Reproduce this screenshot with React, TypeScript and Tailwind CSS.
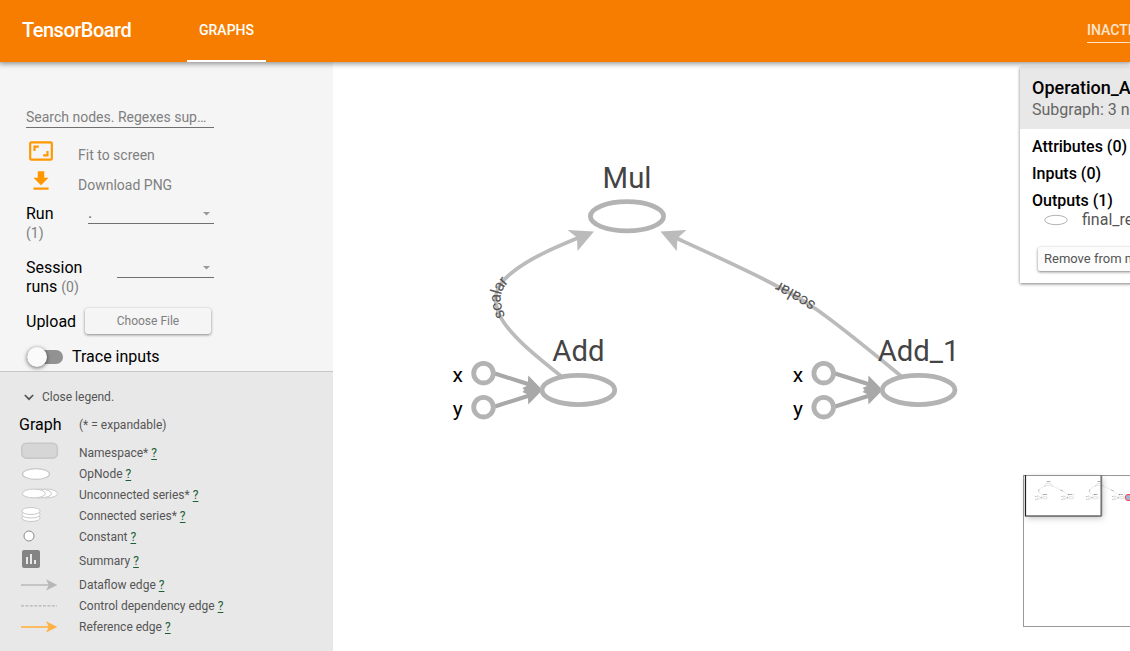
import React from "react";

function SelectField({ value, className }: { value: string; className: string }) {
  return (
    <div className={`flex h-5 items-center justify-between border-b border-[#707070] text-base text-[#666] ${className}`}>
      <span className="pb-px">{value}</span>
      <svg className="mr-1" width="7" height="4" viewBox="0 0 7 4">
        <path d="M0 0h7L3.500 3.500z" fill="#999" />
      </svg>
    </div>
  );
}

const ARROW = "M0 0L10 5L0 10L2.500 5z";

const legend: { label: string; row: string; icon: React.ReactNode }[] = [
  {
    label: "Namespace*",
    row: "h-[21px]",
    icon: <rect x="0.800" y="0.300" width="35.500" height="14.800" rx="4.500" fill="#d6d6d6" stroke="#c8c8c8" strokeWidth="1.600" />,
  },
  {
    label: "OpNode",
    row: "h-[21px]",
    icon: <ellipse cx="15" cy="10" rx="13.500" ry="5.300" fill="#fff" stroke="#c8c8c8" strokeWidth="1.300" />,
  },
  {
    label: "Unconnected series*",
    row: "h-[21px]",
    icon: (
      <g fill="#fff" stroke="#c8c8c8" strokeWidth="1">
        <ellipse cx="25.500" cy="8.500" rx="11" ry="4.400" />
        <ellipse cx="19" cy="8.500" rx="11.500" ry="4.400" />
        <ellipse cx="12.800" cy="8.500" rx="11.500" ry="4.400" />
      </g>
    ),
  },
  {
    label: "Connected series*",
    row: "h-[21px]",
    icon: (
      <g fill="#fff" stroke="#c8c8c8" strokeWidth="1">
        <ellipse cx="10" cy="12" rx="9.200" ry="3.500" />
        <ellipse cx="10" cy="8.500" rx="9.200" ry="3.500" />
        <ellipse cx="10" cy="5" rx="9.200" ry="3.500" />
      </g>
    ),
  },
  {
    label: "Constant",
    row: "h-[21px]",
    icon: <circle cx="8" cy="9" r="5" fill="#fff" stroke="#8c8c8c" strokeWidth="1" />,
  },
  {
    label: "Summary",
    row: "h-[27px]",
    icon: (
      <path
        transform="translate(-2 -4)"
        d="M19 3H5c-1.100 0-2 .9-2 2v14c0 1.100.9 2 2 2h14c1.100 0 2-.9 2-2V5c0-1.100-.9-2-2-2zM9 17H7v-7h2v7zm4 0h-2V7h2v10zm4 0h-2v-4h2v4z"
        fill="#848484"
      />
    ),
  },
  {
    label: "Dataflow edge",
    row: "h-[21px]",
    icon: (
      <g>
        <path d="M0 10H28" stroke="#bbb" strokeWidth="1.600" />
        <path d={ARROW} transform="translate(25 4.300) scale(1.130)" fill="#b7b7b7" />
      </g>
    ),
  },
  {
    label: "Control dependency edge",
    row: "h-[21px]",
    icon: <path d="M0 9.800H36" stroke="#b4b4b4" strokeWidth="1.300" strokeDasharray="3 1.400" />,
  },
  {
    label: "Reference edge",
    row: "h-[21px]",
    icon: (
      <g>
        <path d="M0 10H28" stroke="#ffb143" strokeWidth="1.600" />
        <path d={ARROW} transform="translate(25 4.300) scale(1.130)" fill="#ffb143" />
      </g>
    ),
  },
];

function AddNode({ x, label }: { x: number; label: string }) {
  return (
    <g transform={`translate(${x} 390)`}>
      <g stroke="#a8a8a8" strokeWidth="4">
        <path d="M-83.500 -16.500L-49 -5.500" />
        <path d="M-83.500 16.500L-49 5.500" />
      </g>
      <path d="M-36 0L-50.100 -14.400L-50.700 -4.500L-56 -2L-54 0L-56 2L-50.700 4.500L-50.100 14.400z" fill="#a8a8a8" />
      <g fill="#fff" stroke="#b3b3b3" strokeWidth="4.800">
        <circle cx="-94.900" cy="-16.800" r="9.800" />
        <circle cx="-94.900" cy="17.200" r="9.800" />
        <ellipse cx="0" cy="0" rx="36.400" ry="14.600" />
      </g>
      <text y="-29.200" fontSize="29.300" fill="#444" textAnchor="middle">{label}</text>
      <g fontSize="21" fill="#000" textAnchor="middle">
        <text x="-120.600" y="-8.300">x</text>
        <text x="-120.600" y="25.500">y</text>
      </g>
    </g>
  );
}

function Graph({ id }: { id: string }) {
  return (
    <g>
      <g fill="none" stroke="#bbb" strokeWidth="3.700">
        <path id={`${id}-left`} d="M561 376C536 356 508 334 499 314C490 292 501 281 514 271C532 257 556 247 579 237.500" />
        <path id={`${id}-right`} d="M901 376C873 353 838 324 813 307C780 285 722 259 675 237.500" />
      </g>
      <g fill="#bbb">
        <path d="M594 231.500L567.500 230L577 237.500L577.500 251z" />
        <path d="M660.500 231.500L686.500 230L677.500 238L676.700 251z" />
      </g>
      <g fontSize="16" fill="#555">
        <text dy="5">
          <textPath href={`#${id}-left`} startOffset="83.500">scalar</textPath>
        </text>
        <text dy="5">
          <textPath href={`#${id}-right`} startOffset="111">scalar</textPath>
        </text>
      </g>
      <ellipse cx="627" cy="216.300" rx="36.600" ry="14.600" fill="#fff" stroke="#b3b3b3" strokeWidth="4.800" />
      <text x="627" y="187.700" fontSize="29.300" fill="#444" textAnchor="middle">Mul</text>
      <AddNode x={578.4} label="Add" />
      <AddNode x={918.6} label="Add_1" />
    </g>
  );
}

export default function App() {
  return (
    <div className="flex h-[651px] w-[1130px] flex-col overflow-hidden bg-white font-['Roboto',sans-serif] text-black">
      <header className="relative z-10 flex h-[62px] shrink-0 bg-[#f77d00] text-white shadow-[0_1px_5px_1px_rgba(0,0,0,0.4)]">
        <h1 className="w-[187px] pl-[22px] pt-[15px] text-[20px] font-medium leading-[30px] tracking-[-0.5px]">TensorBoard</h1>
        <div className="flex w-[79px] items-center justify-center border-b-2 border-white text-sm font-medium">GRAPHS</div>
        <div className="ml-auto mt-[18px] flex h-[25px] w-[43px] items-center overflow-hidden whitespace-nowrap border-b border-white/80 text-sm font-medium text-white/80">
          INACTIVE
        </div>
      </header>

      <div className="flex min-h-0 flex-1">
        <aside className="flex w-[333px] shrink-0 flex-col bg-[#f5f5f5]">
          <div className="h-[309px] shrink-0 pl-[26px] pt-[46px]">
            <div className="h-5 w-[188px] whitespace-nowrap border-b border-[#707070] text-sm leading-[19px] text-[#808080]">
              Search nodes. Regexes sup…
            </div>
            <div className="mt-3 flex h-[30px] text-sm leading-[31px] text-[#808080]">
              <svg className="-mt-0.5 ml-0.5 mr-6 shrink-0" width="26" height="26" viewBox="0 0 24 24" fill="#ff9800">
                <path d="M19 12h-2v3h-3v2h5v-5zM7 9h3V7H5v5h2V9zm14-6H3c-1.100 0-2 .9-2 2v14c0 1.100.9 2 2 2h18c1.100 0 2-.9 2-2V5c0-1.100-.9-2-2-2zm0 16.010H3V4.990h18v14.020z" />
              </svg>
              Fit to screen
            </div>
            <div className="flex h-[30px] text-sm leading-[31px] text-[#808080]">
              <svg className="-mt-0.5 ml-0.5 mr-6 shrink-0" width="26" height="26" viewBox="0 0 24 24" fill="#ff9800">
                <path d="M19 9h-4V3H9v6H5l7 7 7-7zM5 18v2h14v-2H5z" />
              </svg>
              Download PNG
            </div>
            <div className="mt-1 flex h-[54px] leading-[19px]">
              <div className="w-[62px]">
                Run
                <div className="text-sm leading-[21px] text-[#808080]">(1)</div>
              </div>
              <SelectField value="." className="w-[126px]" />
            </div>
            <div className="flex h-[50px] leading-[19px]">
              <div className="w-[91px]">
                Session
                <br />
                runs <span className="text-sm leading-[19px] text-[#808080]">(0)</span>
              </div>
              <SelectField value="" className="w-[97px]" />
            </div>
            <div className="flex h-[26px] items-center">
              <span className="w-[59px] pt-0.5">Upload</span>
              <button className="h-[26px] w-[126px] rounded-[3px] bg-[#f5f5f5] text-xs text-[#808080] shadow-[0_1px_3px_rgba(0,0,0,0.45)]">Choose File</button>
            </div>
            <div className="mt-3 flex h-[22px] items-center">
              <div className="ml-px flex h-3.5 w-9 items-center rounded-full bg-[#929292]">
                <span className="h-5 w-5 shrink-0 rounded-full bg-[#fafafa] shadow-[0_1px_4px_rgba(0,0,0,0.6)]" />
              </div>
              <span className="ml-[9px]">Trace inputs</span>
            </div>
          </div>

          <div className="flex-1 border-t border-[#c6c6c6] bg-[#e8e8e8] text-xs text-[#555]">
            <div className="mt-3.5 flex h-[22px] items-center pl-6">
              <svg className="mr-2" width="10" height="7" viewBox="0 0 10 7" fill="none" stroke="#555" strokeWidth="1.700">
                <path d="M0.800 1L5 5.200L9.200 1" />
              </svg>
              Close legend.
            </div>
            <div className="mt-1.5 flex h-[22px] items-center pl-[19px]">
              <span className="w-[60px] text-base text-black">Graph</span>
              (* = expandable)
            </div>
            <div className="pl-[21px] pt-1.5">
              {legend.map((item) => (
                <div key={item.label} className={`flex items-center ${item.row}`}>
                  <svg className="mr-[18px] shrink-0" width="40" height="20" viewBox="0 0 40 20" overflow="visible">
                    {item.icon}
                  </svg>
                  <span>
                    {item.label}{" "}
                    <span className="text-[#1b6034] underline underline-offset-2">?</span>
                  </span>
                </div>
              ))}
            </div>
          </div>
        </aside>

        <main className="relative min-w-0 flex-1 overflow-hidden">
          <svg className="block" width="797" height="589" viewBox="333 62 797 589">
            <Graph id="main" />
          </svg>

          <section className="absolute left-[687px] top-[5px] h-[216px] w-[310px] whitespace-nowrap bg-white shadow-[0_1px_3px_rgba(0,0,0,0.5)]">
            <div className="h-[62px] bg-[#e8e8e8] pl-3 pt-2.5">
              <div className="text-lg font-medium leading-[22px]">Operation_Added</div>
              <div className="text-base leading-[22px] text-[#666]">Subgraph: 3 nodes</div>
            </div>
            <div className="pl-3 pt-1 font-medium leading-[27px]">
              <div>Attributes (0)</div>
              <div>Inputs (0)</div>
              <div>Outputs (1)</div>
            </div>
            <div className="-mt-[5px] flex h-[22px] items-center pl-6 text-base text-[#555]">
              <svg className="mr-3.5" width="24" height="12" viewBox="0 0 24 12">
                <ellipse cx="12" cy="6" rx="11.300" ry="4.700" fill="#fff" stroke="#b3b3b3" />
              </svg>
              final_result
            </div>
            <button className="ml-[18px] mt-4 h-6 w-[200px] rounded-[2px] bg-[#fcfcfc] pl-1.5 text-left text-[13px] text-[#555] shadow-[0_1px_3px_rgba(0,0,0,0.5)]">
              Remove from main graph
            </button>
          </section>

          <div className="absolute left-[690px] top-[413px] h-[152px] w-[200px] border border-[#999] bg-white">
            <svg className="block" width="198" height="150" viewBox="1024 476 198 150" overflow="visible">
              <rect x="1025.500" y="476" width="76" height="40" fill="#fff" className="drop-shadow-[1px_2px_3px_rgba(0,0,0,0.25)]" />
              <g transform="translate(1000.400 467.700) scale(0.077)">
                <Graph id="mini-a" />
              </g>
              <g transform="translate(1051.100 467.700) scale(0.077)">
                <Graph id="mini-b" />
              </g>
              <rect x="1125.500" y="494.500" width="12" height="6" rx="2.500" fill="#a9b3d3" stroke="#f44" />
              <path d="M1025.500 475V516H1101.500" fill="none" stroke="#222" strokeWidth="1.200" />
              <path d="M1101.300 475V516" stroke="#777" strokeWidth="1.800" />
            </svg>
          </div>
        </main>
      </div>
    </div>
  );
}
